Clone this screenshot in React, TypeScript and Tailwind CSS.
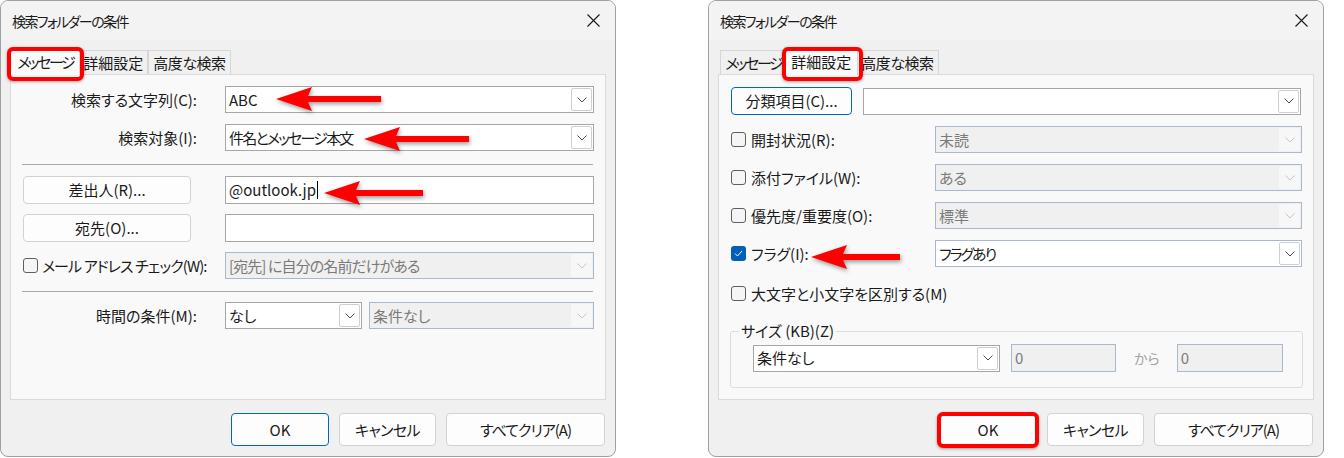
import React from "react";

function Chevron({ light }: { light?: boolean }) {
  return (
    <svg width="10" height="6" viewBox="0 0 10 6" fill="none">
      <path d="M0.5 0.5 L5 5 L9.5 0.5" stroke={light ? "#c6c6c6" : "#4a4a4a"} strokeWidth="1" />
    </svg>
  );
}

function Combo({
  text,
  cls,
  textCls = "",
  disabled,
  blue,
}: {
  text: string;
  cls: string;
  textCls?: string;
  disabled?: boolean;
  blue?: boolean;
}) {
  const box = disabled
    ? "border-[#a9b8cd] bg-[#f0f0f0] text-[#7a7a7a]"
    : blue
    ? "border-[#a9b8cd] bg-white text-[#1a1a1a]"
    : "border-[#a6a6a6] bg-white text-[#1a1a1a]";
  return (
    <div className={`flex h-[27px] shrink-0 items-center border ${box} ${cls}`}>
      <span className={`flex-1 truncate pl-[3px] ${textCls}`}>{text}</span>
      <div
        className={`mr-[1px] flex h-[23px] w-[21px] items-center justify-center rounded-[2px] ${
          disabled ? "bg-[#f7f7f7]" : "border border-[#cfcfcf] bg-white"
        }`}
      >
        <Chevron light={disabled} />
      </div>
    </div>
  );
}

function TextBox({ children, cls, disabled }: { children?: React.ReactNode; cls: string; disabled?: boolean }) {
  return (
    <div
      className={`flex h-[28px] shrink-0 items-center border pl-[3px] ${
        disabled ? "border-[#a9b8cd] bg-[#f0f0f0] text-[#7a7a7a]" : "border-[#a6a6a6] bg-white text-[#1a1a1a]"
      } ${cls}`}
    >
      {children}
    </div>
  );
}

function Btn({ label, cls, primary }: { label: string; cls: string; primary?: boolean }) {
  return (
    <div
      className={`flex shrink-0 items-center justify-center rounded-[4px] border bg-[#fdfdfd] text-[#1a1a1a] ${
        primary ? "border-[#0067c0]" : "border-[#d2d2d2]"
      } ${cls}`}
    >
      {label}
    </div>
  );
}

function Check({ checked }: { checked?: boolean }) {
  return checked ? (
    <div className="flex h-[15px] w-[15px] shrink-0 items-center justify-center rounded-[3px] bg-[#005fb8]">
      <svg width="9" height="7" viewBox="0 0 9 7" fill="none">
        <path d="M1 3.5 L3.5 6 L8 1" stroke="white" strokeWidth="1" />
      </svg>
    </div>
  ) : (
    <div className="h-[15px] w-[15px] shrink-0 rounded-[3px] border border-[#5f5f5f] bg-[#f5f5f5]" />
  );
}

function Arrow({ cls, len }: { cls: string; len: number }) {
  return (
    <svg
      className={`pointer-events-none absolute z-20 drop-shadow-[1px_2px_2px_rgba(0,0,0,0.4)] ${cls}`}
      width={len}
      height={24}
      viewBox={`0 0 ${len} 24`}
    >
      <path d={`M0 12 L36 0 L32 9 L${len} 9 L${len} 15 L32 15 L36 24 Z`} fill="#ff0000" />
    </svg>
  );
}

function CloseX() {
  return (
    <svg width="13" height="13" viewBox="0 0 13 13" fill="none">
      <path d="M0.5 0.5 L12.5 12.5 M12.5 0.5 L0.5 12.5" stroke="#1a1a1a" strokeWidth="1.1" />
    </svg>
  );
}

function Tabs({ sel }: { sel: number }) {
  const names = ["メッセージ", "詳細設定", "高度な検索"];
  const track = ["tracking-[-2.4px]", "", "tracking-[-0.5px]"];
  return (
    <div className="flex h-[24px] items-end pl-[2px]">
      {names.map((n, i) =>
        i === sel ? (
          <div
            key={n}
            className={`relative z-10 -mx-[2px] -mb-[1px] flex h-[28px] items-center border border-b-0 border-[#d6d6d6] bg-[#f9f9f9] px-[6px] ${track[i]}`}
          >
            {n}
          </div>
        ) : (
          <div
            key={n}
            className={`flex h-[24px] items-center border border-b-0 border-[#d6d6d6] bg-[#f0f0f0] px-[4px] ${track[i]}`}
          >
            {n}
          </div>
        )
      )}
    </div>
  );
}

function Dialog({
  sel,
  children,
  overlays,
}: {
  sel: number;
  children: React.ReactNode;
  overlays: React.ReactNode;
}) {
  return (
    <div className="relative flex h-[457px] w-[616px] shrink-0 flex-col overflow-hidden rounded-[8px] border border-[#a0a0a0] bg-[#f0f0f0]">
      <div className="flex h-[39px] shrink-0 items-center justify-between bg-[#f3f3f3] pl-[11px] pr-[15px]">
        <span className="text-[14px] tracking-[-1.6px]">検索フォルダーの条件</span>
        <CloseX />
      </div>
      <div className="px-[9px] pt-[10px]">
        <Tabs sel={sel} />
        <div className="h-[326px] border border-[#dadada] bg-[#f9f9f9]">{children}</div>
      </div>
      <div className="mt-[13px] flex justify-end gap-[10px] pr-[10px]">
        <Btn label="OK" cls="h-[33px] w-[98px]" primary={sel === 0} />
        <Btn label="キャンセル" cls="h-[33px] w-[97px] tracking-[-0.6px]" />
        <Btn label="すべてクリア(A)" cls="h-[33px] w-[159px] tracking-[-1px]" />
      </div>
      {overlays}
    </div>
  );
}

function LeftPanel() {
  return (
    <div className="flex flex-col pt-[11px]">
      <div className="flex h-[27px] items-center">
        <div className="w-[186px] text-right">検索する文字列(C):</div>
        <Combo text="ABC" cls="ml-[28px] w-[369px]" />
      </div>
      <div className="mt-[11px] flex h-[27px] items-center">
        <div className="w-[186px] text-right">検索対象(I):</div>
        <Combo text="件名とメッセージ本文" cls="ml-[28px] w-[369px]" textCls="tracking-[-1.8px]" />
      </div>
      <div className="ml-[11px] mr-[12px] mt-[13px] h-px bg-[#a8a8a8]" />
      <div className="mt-[11px] flex h-[28px] items-center">
        <Btn label="差出人(R)..." cls="ml-[12px] h-[28px] w-[168px]" />
        <TextBox cls="ml-[34px] w-[369px]">
          <span>@outlook.jp</span>
          <span className="ml-[1px] inline-block h-[18px] w-px bg-black" />
        </TextBox>
      </div>
      <div className="mt-[10px] flex h-[28px] items-center">
        <Btn label="宛先(O)..." cls="ml-[12px] h-[28px] w-[168px]" />
        <TextBox cls="ml-[34px] w-[369px]" />
      </div>
      <div className="mt-[10px] flex h-[27px] items-center">
        <div className="flex w-[214px] items-center gap-[4px] pl-[12px]">
          <Check />
          <span className="tracking-[-0.9px]">メール アドレス チェック(W):</span>
        </div>
        <Combo text="[宛先] に自分の名前だけがある" cls="w-[369px]" textCls="tracking-[-0.9px]" disabled />
      </div>
      <div className="ml-[11px] mr-[12px] mt-[12px] h-px bg-[#a8a8a8]" />
      <div className="mt-[10px] flex h-[27px] items-center">
        <div className="w-[186px] text-right">時間の条件(M):</div>
        <Combo text="なし" cls="ml-[28px] w-[137px]" />
        <Combo text="条件なし" cls="ml-[7px] w-[225px]" disabled />
      </div>
    </div>
  );
}

function CheckRow({
  label,
  value,
  checked,
  disabled,
  valueCls,
}: {
  label: string;
  value: string;
  checked?: boolean;
  disabled?: boolean;
  valueCls?: string;
}) {
  return (
    <div className="mt-[11px] flex h-[27px] items-center">
      <div className="flex w-[216px] items-center gap-[5px] pl-[12px]">
        <Check checked={checked} />
        <span>{label}</span>
      </div>
      <Combo text={value} cls="w-[367px]" textCls={valueCls} disabled={disabled} blue={!disabled} />
    </div>
  );
}

function RightPanel() {
  return (
    <div className="flex flex-col pt-[12px]">
      <div className="flex h-[28px] items-center">
        <Btn label="分類項目(C)..." cls="ml-[12px] h-[28px] w-[121px]" primary />
        <Combo text="" cls="ml-[11px] w-[438px]" />
      </div>
      <CheckRow label="開封状況(R):" value="未読" disabled />
      <CheckRow label="添付ファイル(W):" value="ある" disabled />
      <CheckRow label="優先度/重要度(O):" value="標準" disabled />
      <CheckRow label="フラグ(I):" value="フラグあり" valueCls="tracking-[-2px]" checked />
      <div className="mt-[13px] flex h-[27px] items-center gap-[5px] pl-[12px]">
        <Check />
        <span>大文字と小文字を区別する(M)</span>
      </div>
      <fieldset className="ml-[11px] mr-[10px] mt-[14px] rounded-[3px] border border-[#dcdcdc]">
        <legend className="ml-[8px] px-[2px] leading-[20px]">サイズ (KB)(Z)</legend>
        <div className="flex items-center pb-[15px] pl-[22px] pt-[3px]">
          <Combo text="条件なし" cls="w-[247px]" />
          <TextBox cls="ml-[11px] w-[105px]" disabled>
            0
          </TextBox>
          <span className="ml-[18px] text-[14px] text-[#a3a3a3]">から</span>
          <TextBox cls="ml-[17px] w-[106px]" disabled>
            0
          </TextBox>
        </div>
      </fieldset>
    </div>
  );
}

export default function App() {
  return (
    <div className="flex h-[458px] w-[1344px] bg-white font-['Noto_Sans_CJK_JP','Noto_Sans',sans-serif] text-[15px] leading-[20px] text-[#1a1a1a] [font-feature-settings:'palt']">
      <Dialog
        sel={0}
        overlays={
          <>
            <div className="pointer-events-none absolute left-[6px] top-[46px] z-20 h-[34px] w-[77px] rounded-[6px] border-[4px] border-[#ff0000] shadow-[0_1px_3px_rgba(0,0,0,0.35)]" />
            <Arrow cls="left-[275px] top-[86px]" len={105} />
            <Arrow cls="left-[363px] top-[126px]" len={105} />
            <Arrow cls="left-[323px] top-[180px]" len={99} />
          </>
        }
      >
        <LeftPanel />
      </Dialog>
      <div className="ml-[92px]">
        <Dialog
          sel={1}
          overlays={
            <>
              <div className="pointer-events-none absolute left-[73px] top-[46px] z-20 h-[34px] w-[81px] rounded-[6px] border-[4px] border-[#ff0000] shadow-[0_1px_3px_rgba(0,0,0,0.35)]" />
              <div className="pointer-events-none absolute left-[228px] top-[411px] z-20 h-[36px] w-[102px] rounded-[6px] border-[4px] border-[#ff0000] shadow-[0_1px_3px_rgba(0,0,0,0.35)]" />
              <Arrow cls="left-[102px] top-[244px]" len={89} />
            </>
          }
        >
          <RightPanel />
        </Dialog>
      </div>
    </div>
  );
}
